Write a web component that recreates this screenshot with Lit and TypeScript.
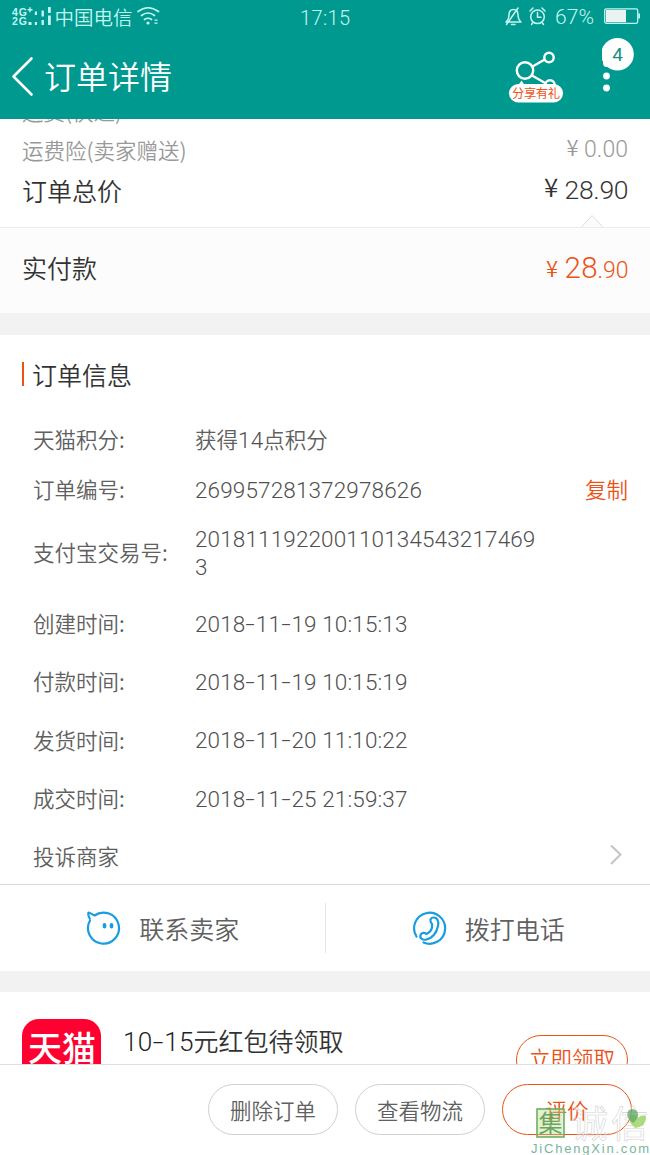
import { LitElement, html, css } from "lit";
import { customElement } from "lit/decorators.js";

interface InfoRow {
  label: string;
  value: string;
  size: "short" | "tall" | "double";
  copy?: boolean;
}

const ROWS: InfoRow[] = [
  { label: "天猫积分:", value: "获得14点积分", size: "short" },
  { label: "订单编号:", value: "269957281372978626", size: "short", copy: true },
  { label: "支付宝交易号:", value: "2018111922001101345432174693", size: "double" },
  { label: "创建时间:", value: "2018-11-19 10:15:13", size: "tall" },
  { label: "付款时间:", value: "2018-11-19 10:15:19", size: "tall" },
  { label: "发货时间:", value: "2018-11-20 11:10:22", size: "tall" },
  { label: "成交时间:", value: "2018-11-25 21:59:37", size: "tall" },
];

/* Sets digits in the Latin face and gives hyphens their wider form. */
const mixed = (s: string) =>
  s.split(/([0-9: ]+|-)/).filter(Boolean).map((p) =>
    p === "-" ? html`<span class="dash">-</span>` : /^[0-9: ]+$/.test(p) ? html`<span class="num">${p}</span>` : p
  );

@customElement("status-bar")
export class StatusBar extends LitElement {
  static styles = css`
    :host { display: flex; height: 34px; }
    svg { display: block; }
    text { font-family: "Noto Sans CJK SC", sans-serif; font-weight: 350; fill: #c2f7f1; }
    .net { font-family: "Liberation Sans", sans-serif; font-weight: 700; font-size: 10.5px; }
    .num { font-family: Roboto, sans-serif; font-weight: 300; }
  `;
  render() {
    return html`<svg width="650" height="34" viewBox="0 0 650 34">
      <text class="net" x="12" y="15.500" textLength="15">4G</text>
      <text class="net" x="12" y="25" textLength="15">2G</text>
      <g fill="#c2f7f1">
        <path d="M27.500 9h5v1.400h-5zM29.300 7.200h1.400v5h-1.400zM28.500 22h3v3h-3zM34.800 22h2.200v3h-2.200zM41.500 20h2.400v5h-2.400zM48 15.500h2.800v9.500h-2.800z"/>
        <path d="M34.800 11.500h2.200v3.500h-2.200zM41.500 10.500h2.400v6h-2.400zM48 7h2.800v6h-2.800z"/>
      </g>
      <text x="54.500" y="24.500" font-size="19.500" textLength="78">中国电信</text>
      <g fill="none" stroke="#c2f7f1" stroke-width="1.700" stroke-linecap="round">
        <path d="M138 11.500q10-7.500 20.500 0M141.500 15.500q6.500-5 13 0M144.500 19.500q3.500-2.500 7 0"/>
      </g>
      <circle cx="148" cy="23" r="1.600" fill="#c2f7f1"/>
      <path d="M154.500 19.500h3v1.300h-3zM154.500 22.500h3v1.300h-3z" fill="#c2f7f1"/>
      <text class="num" x="300" y="24.500" font-size="20" textLength="50">17:15</text>
      <g fill="none" stroke="#c2f7f1" stroke-width="1.500" stroke-linejoin="round" stroke-linecap="round">
        <path d="M506 22h15q-3-2.500-3-7 0-5.500-4.500-5.500T509 15q0 4.500-3 7zM506.500 24.500L518 8M511.500 24.500h3.500"/>
        <circle cx="537.500" cy="16.800" r="6.800"/>
        <path d="M537.500 12.500v4.800h3.500M530 11l3-3M545 11l-3-3M532.500 23l-1 1.500M542.500 23l1 1.500"/>
      </g>
      <text class="num" x="555" y="24" font-size="21" textLength="39">67%</text>
      <rect x="604.700" y="8.800" width="33" height="14.500" rx="1.500" fill="none" stroke="#c2f7f1" stroke-width="1.300"/>
      <rect x="606" y="10" width="20" height="12.200" fill="#e9f3f1"/>
      <path d="M638.300 13.500h1.700v5h-1.700z" fill="#c2f7f1"/>
    </svg>`;
  }
}

@customElement("nav-bar")
export class NavBar extends LitElement {
  static styles = css`
    :host { display: flex; align-items: center; height: 85px; color: #fff; }
    svg { display: block; flex: none; }
    .back { margin-left: 10px; width: 26px; height: 42px; }
    .title { margin: -3px 0 0 8px; font-size: 32px; font-weight: 350; line-height: 44px; flex: 1; }
    .share { width: 56px; height: 60px; margin-right: 38px; }
    .more { width: 48px; height: 85px; }
    .gift { font-size: 12.300px; font-weight: 400; fill: #ec5216; font-family: "Noto Sans CJK SC", sans-serif; }
    .count { font-size: 19px; fill: #1b8d85; font-family: Roboto, sans-serif; font-weight: 400; }
  `;
  render() {
    return html`
      <svg class="back" viewBox="0 0 26 42" fill="none" stroke="#fff" stroke-width="2.600" stroke-linecap="round" stroke-linejoin="round"><path d="M21.500 2.500L3.500 20.500l18 18"/></svg>
      <div class="title">订单详情</div>
      <svg class="share" viewBox="0 0 56 60">
        <g fill="none" stroke="#fff" stroke-width="2.400">
          <circle cx="17" cy="23.500" r="8.200"/><circle cx="41" cy="10.500" r="4.700"/><circle cx="42" cy="38" r="4.700"/>
          <path d="M24.500 19.500L36.800 12.500M24 28.500l14 8"/>
        </g>
        <path d="M10.500 38l3-4.500 3 4.500z" fill="#fff"/>
        <rect x="1" y="37" width="54" height="18.500" rx="9.250" fill="#fff"/>
        <text class="gift" x="4" y="50.800" textLength="48">分享有礼</text>
      </svg>
      <svg class="more" viewBox="0 0 48 85">
        <circle cx="15.500" cy="20.300" r="16.300" fill="#fff"/>
        <circle cx="4.500" cy="29.500" r="3.400" fill="#fff"/>
        <circle cx="4.500" cy="42" r="3.400" fill="#fff"/><circle cx="4.500" cy="54" r="3.400" fill="#fff"/>
        <text class="count" x="15.500" y="27" text-anchor="middle">4</text>
      </svg>`;
  }
}

@customElement("app-root")
export class AppRoot extends LitElement {
  static styles = css`
    :host {
      display: flex; flex-direction: column; width: 650px; height: 1155px; overflow: hidden; position: relative;
      background: #fff; color: #606060; font-family: "Noto Sans CJK SC", sans-serif; font-weight: 350; font-size: 21.500px;
    }
    * { box-sizing: border-box; }
    svg { display: block; flex: none; }
    .num, .dash { font-family: Roboto, sans-serif; font-weight: 300; font-size: 1.047em; color: #505050; }
    .num { white-space: pre-wrap; letter-spacing: .130px; }
    .dash { display: inline-block; width: .460em; text-align: center; transform: scaleX(1.500); }
    .offer .num, .offer .dash { color: #222; }
    .head { background: #00998f; height: 119px; flex: none; }
    .prices { height: 109px; flex: none; overflow: hidden; border-bottom: 1px solid #ececec; padding: 0 22px; position: relative; }
    .line { display: flex; justify-content: space-between; align-items: center; white-space: nowrap; }
    .fade { color: #999; }
    .cut { height: 38px; margin-top: -28px; }
    .ins { height: 40px; }
    .total { height: 42px; color: #333; font-size: 25px; }
    .notch { position: absolute; left: 580px; top: 94px; }
    .paid { height: 85px; flex: none; padding: 0 22px 8px; background: #fcfcfc; color: #333; font-size: 25px; }
    .cny { font-family: "Noto Sans CJK SC", sans-serif; font-weight: 350; }
    .price { font-family: Roboto, sans-serif; font-weight: 300; }
    .gap { background: #f2f2f2; height: 22px; flex: none; }
    .gap.thin { height: 21px; }
    .heading { height: 80px; flex: none; display: flex; align-items: center; padding: 0 0 2px 22px; color: #333; font-size: 25px; }
    .bar { width: 2px; height: 24px; background: #ec5216; margin: 0 8px 0 0; }
    .row { display: grid; grid-template-columns: 162px 346px 1fr; align-items: center; padding: 0 22px 2px 33px; flex: none; line-height: 25.500px; }
    .short { height: 50px; }
    .double { height: 76px; margin-bottom: 3px; }
    .tall { height: 58.400px; padding-bottom: 1px; }
    .value { word-break: break-all; position: relative; top: .700px; }
    .copy { color: #ec5216; justify-self: end; }
    .complain { height: 57.400px; display: flex; flex: none; align-items: center; justify-content: space-between; padding: 0 27px 1px 33px; border-bottom: 1px solid #dcdcdc; }
    .contacts { height: 86px; flex: none; display: flex; align-items: center; font-size: 25px; }
    .contact { flex: 1; display: flex; align-items: center; justify-content: center; gap: 18px; }
    .split { width: 1px; height: 50px; background: #e4e4e4; }
    .promo { height: 72px; flex: none; overflow: hidden; display: flex; align-items: flex-start; padding: 27px 22px 0; }
    .logo { width: 79px; height: 79px; }
    .logotext { font-size: 34px; font-weight: 500; fill: #fff; font-family: "Noto Sans CJK SC", sans-serif; }
    .offer { margin-left: 22px; color: #333; font-size: 25px; line-height: 42px; flex: 1; }
    .claim { margin-top: 16px; width: 112px; height: 50px; border: 1px solid #ec5216; border-radius: 25px; color: #ec5216; text-align: center; line-height: 44px; white-space: nowrap; }
    .actions { height: 91px; flex: none; border-top: 1px solid #dedede; display: flex; gap: 17px; align-items: center; justify-content: flex-end; padding: 0 18px 0; background: #fff; }
    .btn { width: 130px; height: 51px; border: 1px solid #d0d0d0; border-radius: 26px; text-align: center; line-height: 50px; }
    .btn.main { border-color: #ec5216; color: #ec5216; }
    .mark { position: absolute; left: 526px; top: 1100px; }
    .seal { font-size: 24px; font-weight: 400; fill: #5c9b50; font-family: "Noto Sans CJK SC", sans-serif; }
    .ghost { font-size: 37px; font-weight: 400; fill: #fff; fill-opacity: .3; stroke: #d2d2d2; stroke-width: .6px; font-family: "Noto Sans CJK SC", sans-serif; }
    .site { font-size: 13px; font-family: "Liberation Sans", sans-serif; fill: #79b59a; font-weight: 400; }
  `;

  private renderRow(r: InfoRow) {
    return html`<div class="row ${r.size}">
      <span>${r.label}</span><span class="value">${mixed(r.value)}</span>
      ${r.copy ? html`<span class="copy">复制</span>` : null}
    </div>`;
  }

  private watermark() {
    return html`<svg class="mark" width="124" height="55" viewBox="0 0 124 55">
      <rect x="11" y="9" width="27" height="28" fill="#b9dd92" fill-opacity=".4" stroke="#6fae62" stroke-width="1.600"/>
      <text class="seal" x="12.500" y="32" fill-opacity=".9">集</text>
      <text class="ghost" x="45" y="38" textLength="77">诚信</text>
      <path d="M109 28c-6-5-7-11-3-13 3-1 5 1 6 3 3-3 8-3 8-1 0 6-3 10-11 11z" fill="#a3d872" fill-opacity=".9"/>
      <path d="M107.500 23c-6-3-8-9-4.500-13 5-2 10 1 9 6-1 3-3 5-4.500 7z" fill="#5fa765" fill-opacity=".75"/>
      <text class="site" x="5" y="53" textLength="118">JiChengXin.com</text>
    </svg>`;
  }

  render() {
    return html`
      <header class="head"><status-bar></status-bar><nav-bar></nav-bar></header>
      <section class="prices">
        <div class="line fade cut"><span>运费(快递)</span></div>
        <div class="line fade ins"><span>运费险(卖家赠送)</span>
          <svg width="66" height="40" fill="#999"><text class="cny" x="4.500" y="27" font-size="22">¥</text><text class="price" x="22" y="28" font-size="23" textLength="44">0.00</text></svg></div>
        <div class="line total"><span>订单总价</span>
          <svg width="88" height="40" fill="#333"><text class="cny" x="4" y="27" font-size="26">¥</text><text class="price" x="24.500" y="28.500" font-size="26.500" textLength="64">28.90</text></svg></div>
        <svg class="notch" width="26" height="16" fill="#fcfcfc" stroke="#dcdcdc"><path d="M1 14.500L12 2.500l11.500 12"/></svg>
      </section>
      <section class="line paid"><span>实付款</span>
        <svg width="84" height="40" fill="#ec5216"><text class="cny" x="2" y="30" font-size="22">¥</text><text class="price" x="20.500" y="31" font-size="29.500" textLength="33">28</text><text class="price" x="53.500" y="31" font-size="23" textLength="31">.90</text></svg>
      </section>
      <div class="gap"></div>
      <div class="heading"><i class="bar"></i>订单信息</div>
      ${ROWS.map((r) => this.renderRow(r))}
      <div class="complain"><span>投诉商家</span>
        <svg width="14" height="22" fill="none" stroke="#c4c4c4" stroke-width="2"><path d="M2 1.500l9.500 9L2 20"/></svg></div>
      <div class="contacts">
        <div class="contact">
          <svg width="36" height="36" viewBox="0 0 36 36" fill="none" stroke="#189ce2" stroke-width="2.200" stroke-linecap="round" stroke-linejoin="round">
            <path d="M5 10.500A15.500 15.500 0 1 0 9.500 5.500C7.500 4.500 5.500 3 3.500 2.500c-.5 1.500 0 4 1.200 6"/>
            <path d="M19.500 14.800v2M26.500 14.800v2" stroke-width="3.600"/></svg>
          <span>联系卖家</span></div>
        <i class="split"></i>
        <div class="contact">
          <svg width="36" height="36" viewBox="0 0 36 36" fill="none" stroke="#189ce2" stroke-width="2.200" stroke-linecap="round" stroke-linejoin="round">
            <path d="M5.500 26.500A15.500 15.500 0 1 1 12.500 32.500"/>
            <path d="M21 14c-3-3-1.500-6.500 1.500-6.500 4 0 5.500 4 4.500 8.500-1.500 7-6 12-11.500 13.500-4 1-7-1.500-6-4.500 1-2.500 4-2.800 6-1 3-1.500 5-4 5.500-6.500.3-1.500 0-2.500 0-3.500z"/></svg>
          <span>拨打电话</span></div>
      </div>
      <div class="gap thin"></div>
      <section class="promo">
        <svg class="logo" viewBox="0 0 79 79"><rect width="79" height="79" rx="17" fill="#ff0030"/><text class="logotext" x="6" y="42" textLength="68">天猫</text></svg>
        <div class="offer">${mixed("10-15元红包待领取")}</div>
        <div class="claim">立即领取</div>
      </section>
      <footer class="actions">
        <div class="btn">删除订单</div><div class="btn">查看物流</div><div class="btn main">评价</div>
      </footer>
      ${this.watermark()}
    `;
  }
}
